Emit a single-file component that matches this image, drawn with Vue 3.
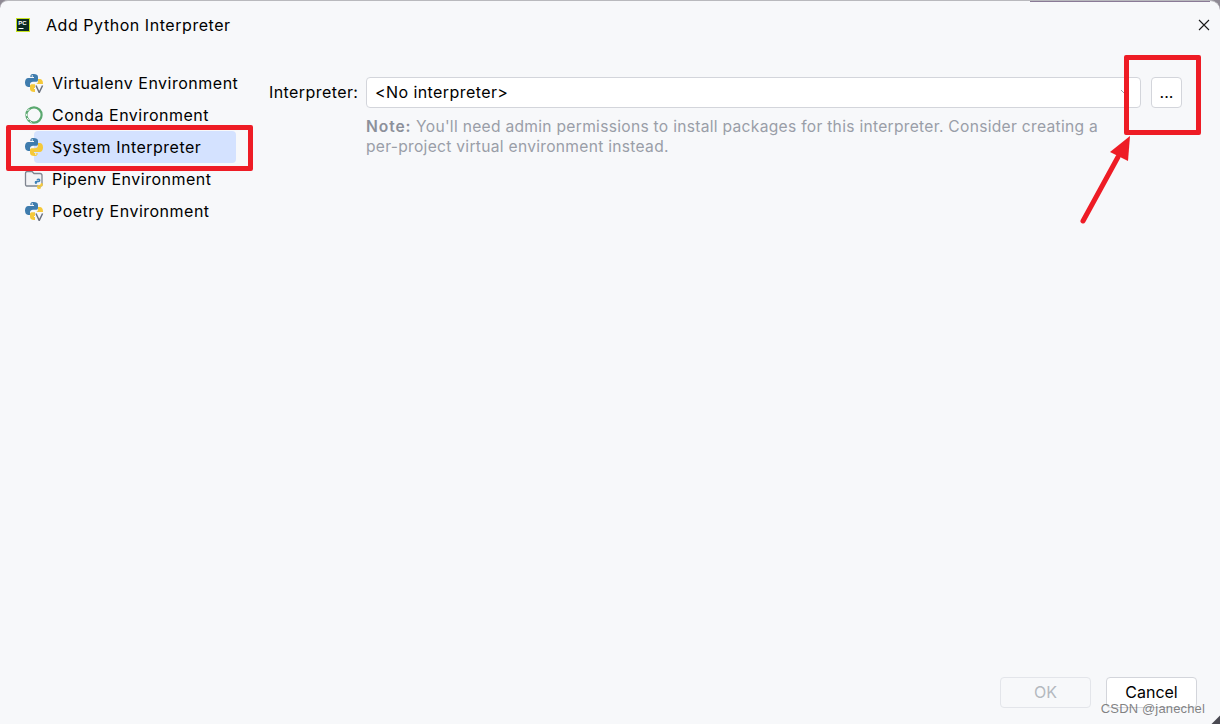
<template>
  <div class="Dialog">
    <span class="TopTint"></span>
    <header class="TitleBar">
      <svg class="AppIcon" width="16" height="16" viewBox="0 0 16 16">
        <rect x="1" y="1" width="14" height="14" fill="#c6e31f" />
        <rect x="2" y="2" width="12" height="12" fill="#0b2a22" />
        <text x="3.2" y="8" class="AppIconText">PC</text>
        <rect x="3.5" y="11" width="5" height="1" fill="#fff" />
      </svg>
      <span class="TitleText">Add Python Interpreter</span>
      <svg class="CloseIcon" width="12" height="12" viewBox="0 0 12 12">
        <path d="M1 1 L11 11 M11 1 L1 11" stroke="#1a1a1a" stroke-width="1.1" fill="none" />
      </svg>
    </header>

    <div class="Body">
      <ul class="EnvList">
        <li v-for="item in envItems" :key="item.name" class="EnvRow" :class="{ Active: item.active }">
          <svg class="EnvIcon" width="20" height="20" viewBox="0 0 20 20">
            <template v-if="item.icon === 'conda'">
              <circle cx="10" cy="10" r="7.6" fill="none" stroke="#5aa86f" stroke-width="2.2" />
              <path d="M3.4 6 L5.4 4 M2.2 8.8 L2.8 11 M3.2 13 L4.6 15 M6 16.4 L7.6 17.6" stroke="#f7f8fa" stroke-width="1" fill="none" />
            </template>
            <template v-else-if="item.icon === 'folder'">
              <path d="M1.5 4.5 Q1.5 2.5 3.5 2.5 H8 L10 4.5 H16 Q18 4.5 18 6.5 V16 Q18 17 16 17 H3.5 Q1.5 17 1.5 15.5 Z" fill="#f2f3f5" stroke="#7f8590" stroke-width="1.3" />
              <path d="M14.5 9.5 C12.5 9.5 12.6 10.5 12.6 11.5 H15 V12.1 H11.6 C10.4 12.1 10.4 15 11.8 15 H12.6 C12.6 13.6 13.4 13.2 14.5 13.2 C15.6 13.2 16.4 13 16.4 11.6 C16.4 10.2 16 9.5 14.5 9.5 Z" fill="#3f82b8" />
              <path d="M15 20 C17 20 16.9 19 16.9 18 H14.5 V17.4 H17.9 C19.1 17.4 19.1 14 17.7 14 H16.9 C16.9 15.6 16.1 16 15 16 C13.9 16 13.1 16.4 13.1 18 C13.1 19.4 13.5 20 15 20 Z" fill="#f5c93a" />
            </template>
            <template v-else>
              <path d="M9.8 1 C6.2 1 6.4 2.6 6.4 4.1 H10 V5.1 H4.4 C2.2 5.1 1 7 1 9.6 C1 12.2 2.2 14 4.2 14 H6 V11.6 C6 9.8 7.4 8.8 9 8.8 H12.4 C13.6 8.8 14 7.8 14 6.8 V3.9 C14 1.9 12.2 1 9.8 1 Z" fill="#3f7cad" />
              <circle cx="8.3" cy="3" r="0.8" fill="#f7f8fa" />
              <path d="M10.2 19 C13.8 19 13.6 17.4 13.6 15.9 H10 V14.9 H15.6 C17.8 14.9 19 13 19 10.4 C19 7.8 17.8 6 15.8 6 H14 V8.4 C14 10.2 12.6 11.2 11 11.2 H7.6 C6.4 11.2 6 12.2 6 13.2 V16.1 C6 18.1 7.8 19 10.2 19 Z" fill="#f5c93a" />
              <circle cx="11.7" cy="17" r="0.8" fill="#f7f8fa" />
              <template v-if="item.icon === 'venv'">
                <rect x="11" y="11" width="9" height="9" fill="#f7f8fa" />
                <path d="M12 12.5 L15.2 19.5 L18.6 12.5" fill="none" stroke="#6b7280" stroke-width="1.5" />
              </template>
            </template>
          </svg>
          <span class="EnvName">{{ item.name }}</span>
        </li>
      </ul>

      <section class="Panel">
        <div class="FieldRow">
          <label class="FieldLabel">Interpreter:</label>
          <div class="Combo">
            <span>&lt;No interpreter&gt;</span>
            <svg width="10" height="6" viewBox="0 0 10 6">
              <path d="M1 1 L5 5 L9 1" fill="none" stroke="#9aa0ab" stroke-width="1" />
            </svg>
          </div>
          <button class="BrowseBtn">...</button>
        </div>
        <p class="NoteText"><b>Note:</b> You'll need admin permissions to install packages for this interpreter. Consider creating a per-project virtual environment instead.</p>
      </section>
    </div>

    <footer class="Footer">
      <button class="FootBtn Disabled">OK</button>
      <button class="FootBtn">Cancel</button>
    </footer>

    <!-- 截图上的红色标注 -->
    <span class="MarkBox MarkList"></span>
    <span class="MarkBox MarkBrowse"></span>
    <svg class="MarkArrow" width="70" height="100" viewBox="0 0 70 100">
      <path d="M4 90 L39 26" stroke="#ee1c25" stroke-width="5" stroke-linecap="round" fill="none" />
      <path d="M51 5 L31 21 L49 30 Z" fill="#ee1c25" />
    </svg>
    <span class="Watermark">CSDN @janechel</span>
    <span class="CornerTip"></span>
  </div>
</template>

<script setup>
  const envItems = [
    { name: 'Virtualenv Environment', icon: 'venv' },
    { name: 'Conda Environment', icon: 'conda' },
    { name: 'System Interpreter', icon: 'python', active: true },
    { name: 'Pipenv Environment', icon: 'folder' },
    { name: 'Poetry Environment', icon: 'venv' }
  ];
</script>

<style>
  html, body {
    margin: 0;
    background: #8f8a94;
    overflow: hidden;
  }
</style>

<style scoped>
  * {
    box-sizing: border-box;
  }
  .Dialog {
    position: relative;
    width: 1220px;
    height: 724px;
    display: flex;
    flex-direction: column;
    background: #f7f8fa;
    border-radius: 8px 10px 0 0;
    border-top: 1px solid #b9b9bd;
    font-family: Inter, "Liberation Sans", sans-serif;
    font-size: 16px;
    letter-spacing: 0.42px;
    color: #000;
    overflow: hidden;
  }
  .TopTint {
    position: absolute;
    top: -1px;
    left: 1030px;
    width: 180px;
    height: 2px;
    background: #8a7a96;
  }
  .TitleBar {
    height: 47px;
    display: flex;
    align-items: center;
    padding: 0 10px 0 15px;
  }
  .AppIcon {
    flex: none;
  }
  .AppIconText {
    font-family: "Liberation Sans", sans-serif;
    font-size: 6px;
    font-weight: 700;
    letter-spacing: 0;
    fill: #fff;
  }
  .TitleText {
    margin-left: 15px;
    flex: 1;
    letter-spacing: 0.55px;
  }
  .Body {
    flex: 1;
    display: flex;
    min-height: 0;
  }
  .EnvList {
    list-style: none;
    margin: 0;
    padding: 19px 0 0 24px;
    width: 269px;
    flex: none;
    letter-spacing: 0.5px;
  }
  .EnvRow {
    position: relative;
    height: 32px;
    width: 212px;
    display: flex;
    align-items: center;
    gap: 8px;
    white-space: nowrap;
  }
  .EnvRow.Active::before {
    content: "";
    position: absolute;
    left: 10px;
    top: 0;
    right: 0;
    bottom: 0;
    background: #d4e2ff;
    border-radius: 4px;
  }
  .EnvIcon, .EnvName {
    position: relative;
    flex: none;
  }
  .Panel {
    flex: 1;
    padding: 29px 39px 0 0;
  }
  .FieldRow {
    display: flex;
    align-items: center;
    height: 31px;
    line-height: 29px;
  }
  .FieldLabel {
    width: 97px;
    flex: none;
    padding-bottom: 1px;
  }
  .Combo {
    width: 775px;
    height: 31px;
    display: flex;
    align-items: center;
    justify-content: space-between;
    padding: 0 10px 1px 8px;
    background: #fff;
    border: 1px solid #d3d5db;
    border-radius: 4px;
  }
  .BrowseBtn {
    margin-left: 10px;
    width: 31px;
    height: 31px;
    padding: 0;
    background: #fff;
    border: 1px solid #d3d5db;
    border-radius: 4px;
    font: inherit;
    color: #000;
  }
  .NoteText {
    margin: 9px 0 0 97px;
    width: 735px;
    font-size: 15.6px;
    line-height: 19.6px;
    letter-spacing: 0.29px;
    color: #9a9ea8;
  }
  .NoteText b {
    font-weight: 600;
    letter-spacing: 0.9px;
    color: #8c909a;
  }
  .Footer {
    height: 47px;
    display: flex;
    justify-content: flex-end;
    align-items: flex-start;
    gap: 15px;
    padding-right: 23px;
  }
  .FootBtn {
    width: 91px;
    height: 31px;
    padding: 0 0 2px;
    background: #fff;
    border: 1px solid #d3d5db;
    border-radius: 4px;
    font: inherit;
    color: #000;
  }
  .FootBtn.Disabled {
    background: #f7f8fa;
    border-color: #e3e5ea;
    color: #b4b8bf;
  }
  .MarkBox {
    position: absolute;
    border: 5px solid #ee1c25;
    border-radius: 2px;
  }
  .MarkList {
    left: 6px;
    top: 124px;
    width: 247px;
    height: 46px;
  }
  .MarkBrowse {
    left: 1124px;
    top: 54px;
    width: 77px;
    height: 80px;
  }
  .MarkArrow {
    position: absolute;
    left: 1079px;
    top: 130px;
  }
  .Watermark {
    position: absolute;
    right: 15px;
    bottom: 8px;
    font-family: "Liberation Sans", sans-serif;
    font-size: 13px;
    letter-spacing: 0.15px;
    color: rgba(90, 90, 90, 0.75);
  }
  .CornerTip {
    position: absolute;
    right: -6px;
    bottom: -6px;
    width: 12px;
    height: 12px;
    background: #4a4a52;
    transform: rotate(45deg);
  }
</style>
